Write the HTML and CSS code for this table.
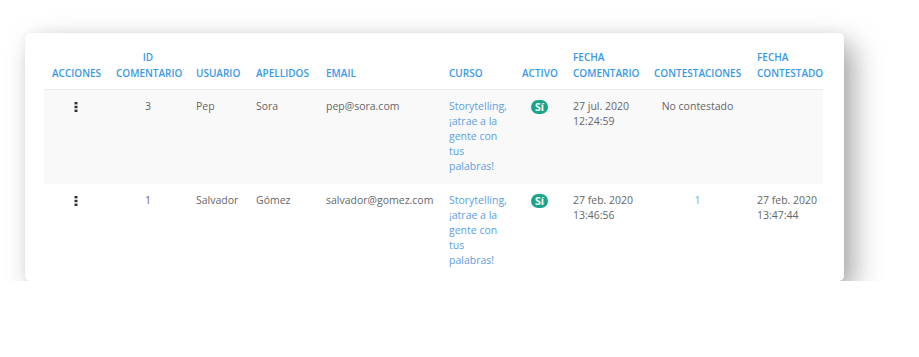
FILE: index.html
```html
<!DOCTYPE html>
<html lang="es">
<head>
<meta charset="utf-8">
<link rel="stylesheet" href="styles.css">
</head>
<body>
<div class="card">
  <table class="grid">
    <colgroup>
      <col class="c1"><col class="c2"><col class="c3"><col class="c4"><col class="c5">
      <col class="c6"><col class="c7"><col class="c8"><col class="c9"><col class="c10">
    </colgroup>
    <thead>
      <tr>
        <th class="center">ACCIONES</th>
        <th class="center">ID<br>COMENTARIO</th>
        <th>USUARIO</th>
        <th>APELLIDOS</th>
        <th>EMAIL</th>
        <th>CURSO</th>
        <th class="center">ACTIVO</th>
        <th>FECHA<br>COMENTARIO</th>
        <th class="center">CONTESTACIONES</th>
        <th>FECHA<br>CONTESTADO</th>
      </tr>
    </thead>
    <tbody>
      <tr class="odd">
        <td class="center"><svg class="dots" width="4" height="10" viewBox="0 0 4 10"><rect x="0.5" y="0" width="3" height="2.4" fill="#333"/><rect x="0.5" y="3.8" width="3" height="2.4" fill="#333"/><rect x="0.5" y="7.6" width="3" height="2.4" fill="#333"/></svg></td>
        <td class="center">3</td>
        <td>Pep</td>
        <td>Sora</td>
        <td>pep@sora.com</td>
        <td class="link">Storytelling, ¡atrae a la gente con tus palabras!</td>
        <td class="center"><span class="badge">Sí</span></td>
        <td class="date">27 jul. 2020<br>12:24:59</td>
        <td class="center">No contestado</td>
        <td></td>
      </tr>
      <tr>
        <td class="center"><svg class="dots" width="4" height="10" viewBox="0 0 4 10"><rect x="0.5" y="0" width="3" height="2.4" fill="#333"/><rect x="0.5" y="3.8" width="3" height="2.4" fill="#333"/><rect x="0.5" y="7.6" width="3" height="2.4" fill="#333"/></svg></td>
        <td class="center">1</td>
        <td>Salvador</td>
        <td>Gómez</td>
        <td>salvador@gomez.com</td>
        <td class="link">Storytelling, ¡atrae a la gente con tus palabras!</td>
        <td class="center"><span class="badge">Sí</span></td>
        <td class="date">27 feb. 2020<br>13:46:56</td>
        <td class="center"><span class="num">1</span></td>
        <td class="date">27 feb. 2020<br>13:47:44</td>
      </tr>
    </tbody>
  </table>
</div>
</body>
</html>
```
FILE: styles.css
```css
html, body {
  margin: 0;
  padding: 0;
  background: #ffffff;
}
body {
  font-family: "Open Sans", "Liberation Sans", sans-serif;
  font-size: 10.5px;
  color: #666;
}
.card {
  margin: 33px 0 0 25px;
  width: 819px;
  height: 248px;
  box-sizing: border-box;
  padding: 8px 21px 2px 19px;
  background: #fff;
  border-radius: 5px;
  box-shadow: 10px 11px 28px rgba(0, 0, 0, 0.34), 0 0 10px rgba(0, 0, 0, 0.05);
}
.grid {
  width: 779px;
  table-layout: fixed;
  border-collapse: collapse;
}
.c1 { width: 64px; }
.c2 { width: 80px; }
.c3 { width: 60px; }
.c4 { width: 70px; }
.c5 { width: 123px; }
.c6 { width: 73px; }
.c7 { width: 51px; }
.c8 { width: 81px; }
.c9 { width: 103px; }
.c10 { width: 74px; }
th {
  font-size: 10px;
  font-weight: 600;
  color: #3a98e6;
  text-align: left;
  vertical-align: bottom;
  line-height: 15.5px;
  padding: 9px 8px 8px 8px;
  white-space: nowrap;
  border-bottom: 1px solid #ececec;
}
td {
  vertical-align: top;
  line-height: 15px;
  padding: 9px 8px 10px 8px;
  text-align: left;
}
td.date {
  white-space: nowrap;
}
tr.odd td {
  background: #f9f9f9;
}
.center {
  text-align: center;
}
.link {
  color: #5d9ee2;
}
.num {
  color: #7aa8d8;
}
.dots {
  display: inline-block;
  vertical-align: top;
  margin-top: 3px;
}
.badge {
  display: inline-block;
  background: #17a689;
  color: #fff;
  font-weight: 700;
  font-size: 10.5px;
  line-height: 14px;
  padding: 0 4px;
  border-radius: 7px;
  margin-top: 1px;
}
```
